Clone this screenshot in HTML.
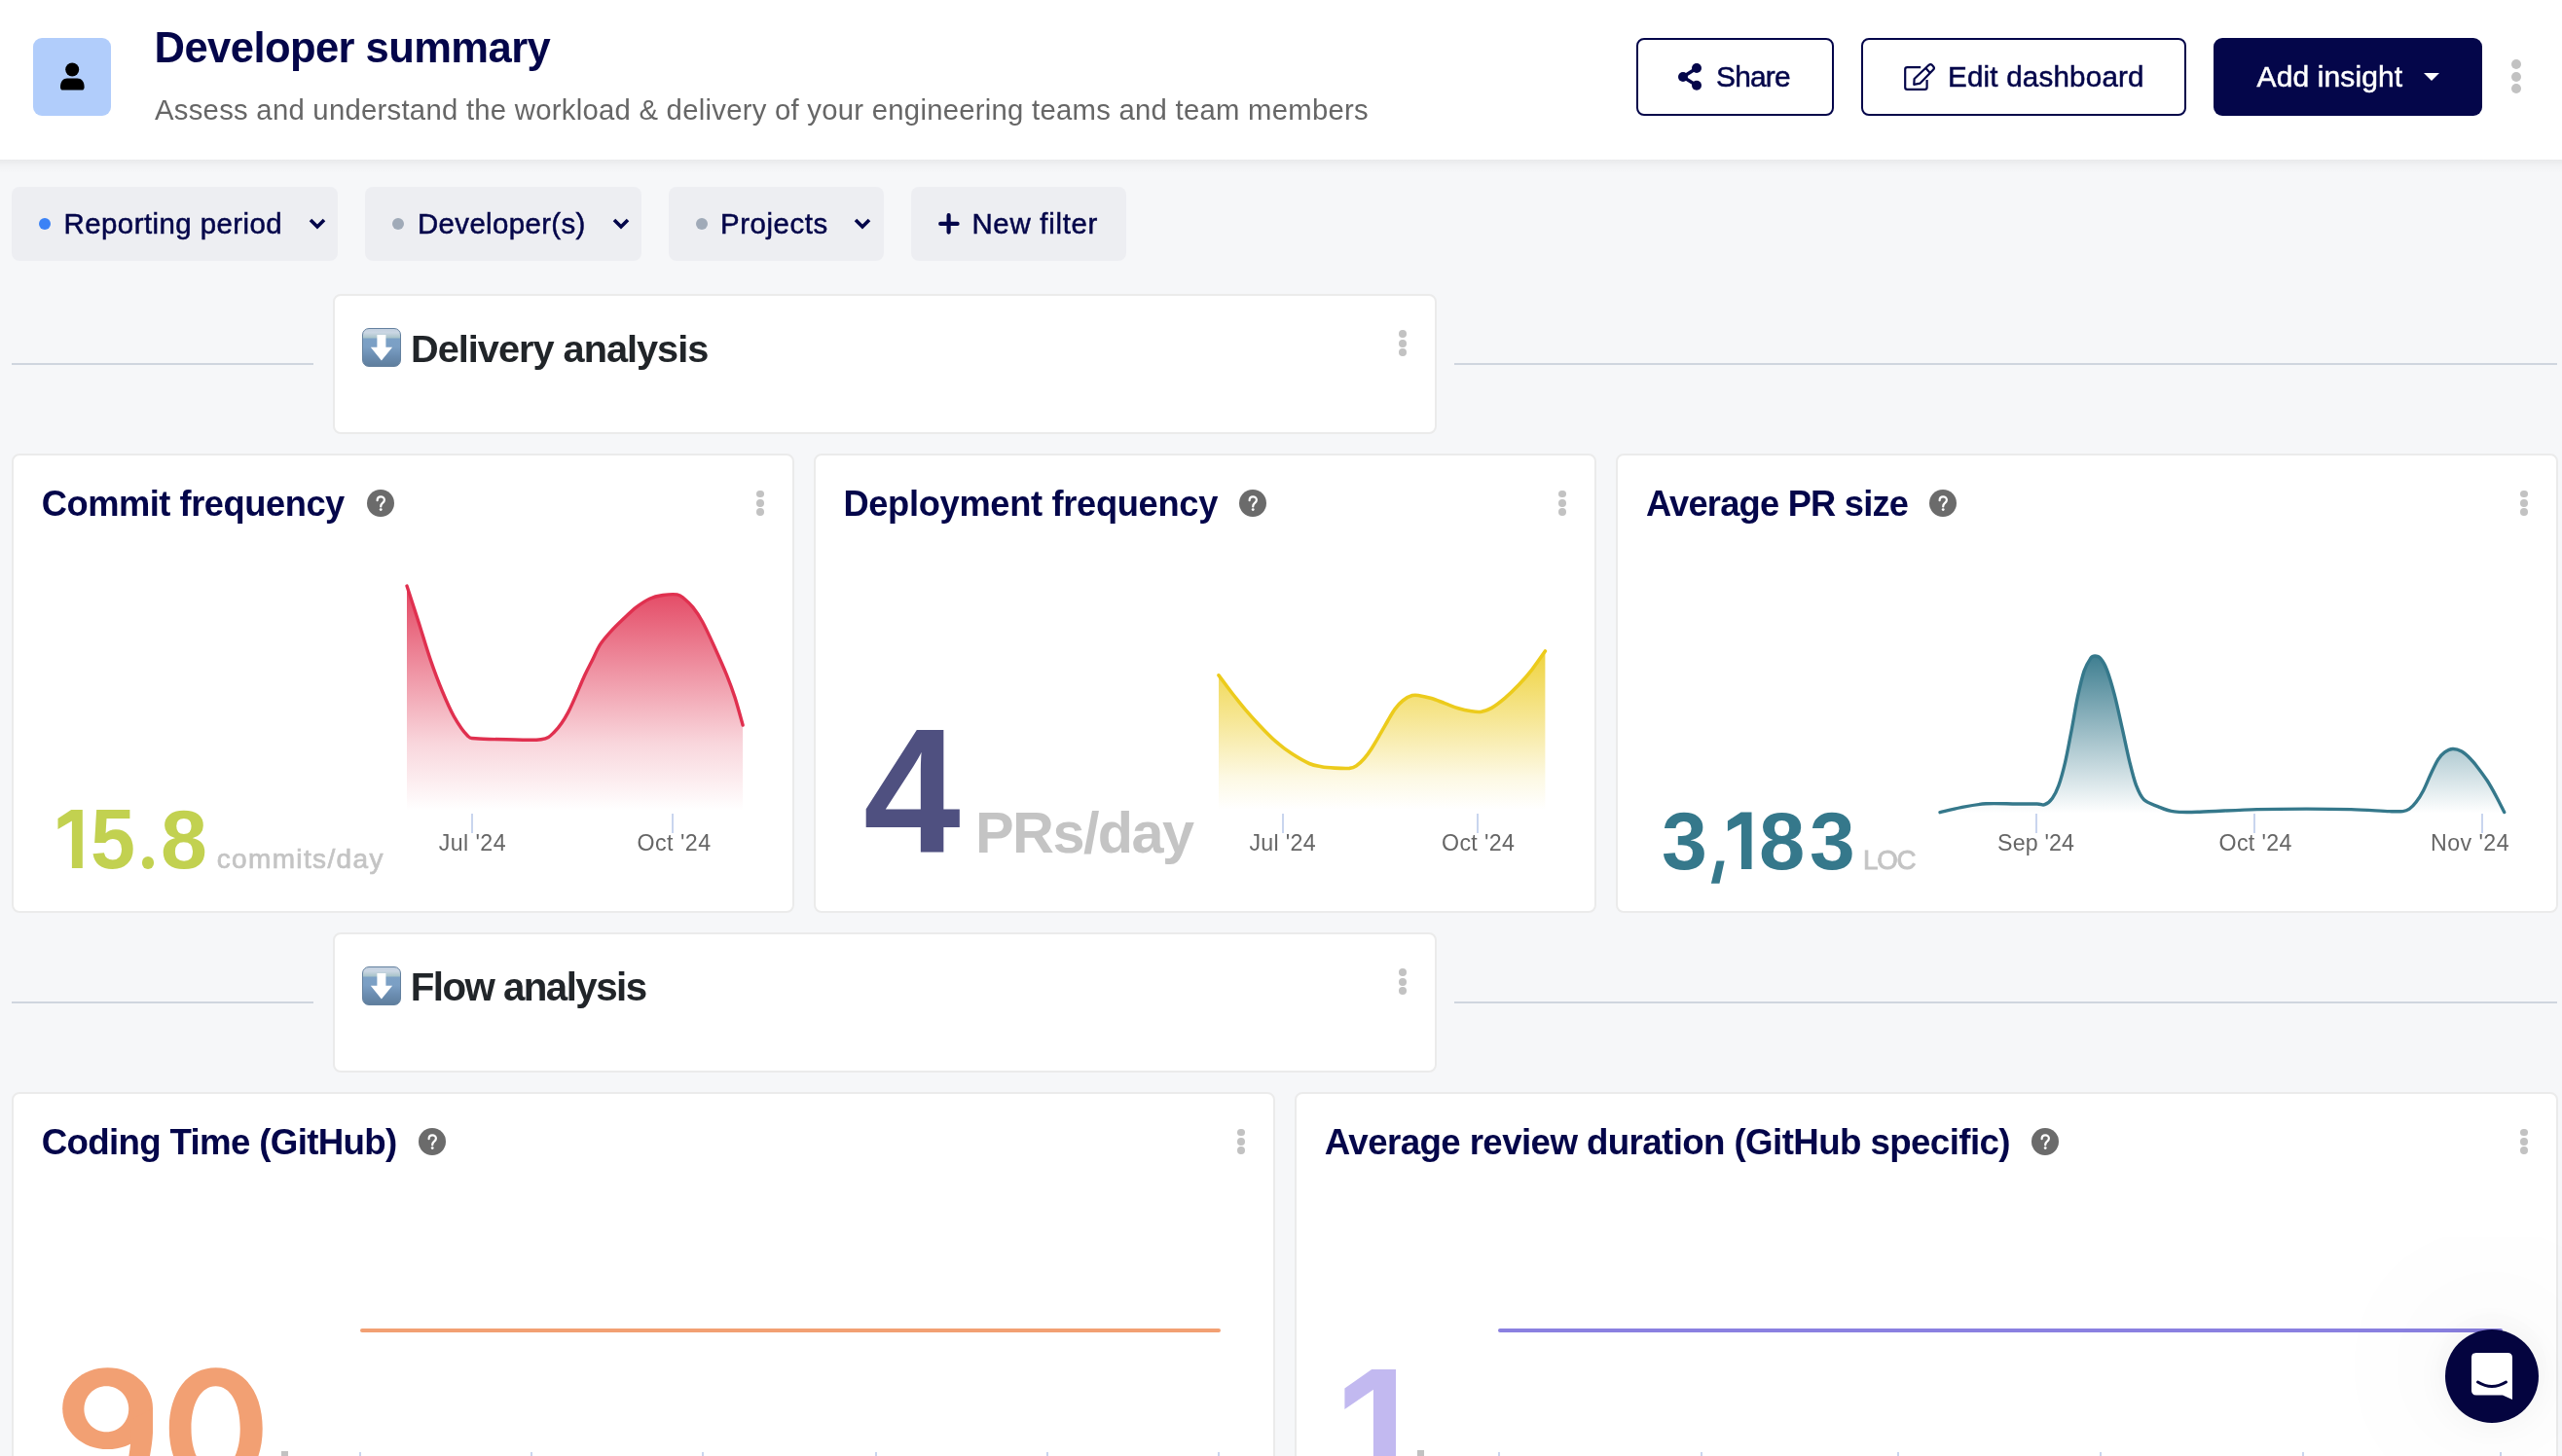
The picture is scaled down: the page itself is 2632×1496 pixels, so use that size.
<!DOCTYPE html>
<html><head><meta charset="utf-8">
<style>
html,body{margin:0;padding:0;}
body{width:2632px;height:1496px;overflow:hidden;background:#f6f7f9;font-family:"Liberation Sans",sans-serif;position:relative;color:#04064a;}
#root{position:absolute;left:0;top:0;width:2632px;height:1496px;overflow:hidden;background:#f6f7f9;will-change:transform;}
.abs{position:absolute;}
.t{position:absolute;white-space:nowrap;line-height:1;}
.med{-webkit-text-stroke:0.5px currentColor;}
#hdr{left:0;top:0;width:2632px;height:164px;background:#fff;}
.btn{position:absolute;box-sizing:border-box;border:2px solid #04064a;border-radius:8px;background:#fff;top:39px;height:80px;}
.chip{position:absolute;top:192px;height:76px;background:#edeef2;border-radius:8px;}
.dot{position:absolute;width:12px;height:12px;border-radius:50%;top:224px;}
.card{position:absolute;box-sizing:border-box;background:#fff;border:2px solid #ebebeb;border-radius:8px;}
.kebab{position:absolute;width:8px;}
.kebab i{display:block;width:7.8px;height:7.8px;border-radius:50%;background:#c2c2c2;margin-bottom:1.7px;}
.help{position:absolute;width:28px;height:28px;border-radius:50%;background:#6b6b6b;}
.help svg{position:absolute;left:0;top:0;}
.sline{position:absolute;height:2px;background:#cfd5de;}
.emoji{position:absolute;box-sizing:border-box;width:40px;height:40px;border-radius:7px;border:1px solid #64819f;background:linear-gradient(#c3d0df 0%,#cbd7e4 10%,#a8c3c9 24%,#7ca1c6 26%,#7b9fc4 48%,#6a8cb0 75%,#5f7e9d 100%);}
.axis{position:absolute;white-space:nowrap;line-height:1;font-size:24px;color:#666;}
.tick{position:absolute;width:2px;background:#c9d5ee;}

</style></head>
<body>
<div id="root">
<div id="hdr" class="abs"></div>
<div class="abs" style="left:0;top:164px;width:2632px;height:14px;background:linear-gradient(rgba(0,0,0,0.055),rgba(0,0,0,0.018) 45%,rgba(0,0,0,0));"></div>
<div class="abs" style="left:34px;top:39px;width:80px;height:80px;background:#b1cdfb;border-radius:9px;"></div>
<svg class="abs" style="left:54px;top:59px" width="40" height="40" viewBox="0 0 40 40">
<circle cx="20.2" cy="12.5" r="7" fill="#000"/>
<path d="M8,30.5 C8,24.5 11,21.6 15,21.6 L25.5,21.6 C29.5,21.6 32.6,24.5 32.6,30.5 C32.6,32.6 31.8,33.6 30,33.6 L10.6,33.6 C8.8,33.6 8,32.6 8,30.5 Z" fill="#000"/>
</svg>
<div class="t" id="title" style="left:158.6px;top:28px;font-size:43.57px;letter-spacing:-0.583px;color:#04064a;font-weight:bold;">Developer summary</div>
<div class="t" id="subtitle" style="left:159px;top:98px;font-size:29.28px;letter-spacing:0.268px;color:#666666;">Assess and understand the workload &amp; delivery of your engineering teams and team members</div>

<div class="btn" style="left:1681px;width:203px;"></div>
<svg class="abs" style="left:1722px;top:62px" width="30" height="34" viewBox="0 0 30 34">
<line x1="7" y1="17" x2="21" y2="8" stroke="#04064a" stroke-width="3.4"/>
<line x1="7" y1="17" x2="21" y2="25.7" stroke="#04064a" stroke-width="3.4"/>
<circle cx="7" cy="17" r="5" fill="#04064a"/>
<circle cx="21" cy="8" r="5" fill="#04064a"/>
<circle cx="21" cy="25.7" r="5" fill="#04064a"/>
</svg>
<div class="t" id="share" style="left:1763px;top:64px;font-size:29.86px;letter-spacing:-0.76px;color:#04064a;-webkit-text-stroke:0.5px #04064a;">Share</div>

<div class="btn" style="left:1912px;width:334px;"></div>
<svg class="abs" style="left:1952px;top:60px" width="40" height="38" viewBox="0 0 40 38">
<path d="M21.2,9.1 L7.4,9.1 Q5.2,9.1 5.2,11.3 L5.2,29.7 Q5.2,31.9 7.4,31.9 L25.4,31.9 Q27.6,31.9 27.6,29.7 L27.6,22.1" fill="none" stroke="#04064a" stroke-width="2.2"/>
<path d="M14.6,21 L29.6,6.8 Q31.3,5.4 32.9,6.9 L34.3,8.5 Q35.6,10.1 34.2,11.5 L20.4,25.7 L14.3,26.8 Z" fill="none" stroke="#04064a" stroke-width="2.2" stroke-linejoin="round"/>
<path d="M26.4,10 L30.4,14.4" stroke="#04064a" stroke-width="2.2"/>
</svg>
<div class="t" id="editd" style="left:2001px;top:64px;font-size:29.57px;letter-spacing:0.205px;color:#04064a;-webkit-text-stroke:0.5px #04064a;">Edit dashboard</div>

<div class="abs" style="left:2274px;top:39px;width:276px;height:80px;background:#04064a;border-radius:9px;"></div>
<div class="t" id="addi" style="left:2318.5px;top:64px;font-size:30px;letter-spacing:0.12px;color:#ffffff;-webkit-text-stroke:0.5px #fff;">Add insight</div>
<svg class="abs" style="left:2490px;top:75px" width="16" height="8" viewBox="0 0 16 8"><path d="M0,0 L16,0 L8,8 Z" fill="#fff"/></svg>
<div class="kebab" style="left:2580px;top:60.9px;"><i style="width:10px;height:10px;margin-bottom:2.75px"></i><i style="width:10px;height:10px;margin-bottom:2.75px"></i><i style="width:10px;height:10px"></i></div>

<div class="chip" style="left:12px;width:335px;"></div>
<div class="dot" style="left:40px;background:#3b82f6;"></div>
<div class="t" id="c1" style="left:65.6px;top:215px;font-size:29.42px;letter-spacing:0.443px;color:#04064a;-webkit-text-stroke:0.5px #04064a;">Reporting period</div>
<svg class="abs" style="left:316px;top:222px" width="20" height="16" viewBox="0 0 20 16"><path d="M3,4 L10,11 L17,4" fill="none" stroke="#04064a" stroke-width="3.6"/></svg>

<div class="chip" style="left:375px;width:284px;"></div>
<div class="dot" style="left:403px;background:#a0aab8;"></div>
<div class="t" id="c2" style="left:429px;top:215px;font-size:29.42px;letter-spacing:0.361px;color:#04064a;-webkit-text-stroke:0.5px #04064a;">Developer(s)</div>
<svg class="abs" style="left:628px;top:222px" width="20" height="16" viewBox="0 0 20 16"><path d="M3,4 L10,11 L17,4" fill="none" stroke="#04064a" stroke-width="3.6"/></svg>

<div class="chip" style="left:687px;width:221px;"></div>
<div class="dot" style="left:715px;background:#a0aab8;"></div>
<div class="t" id="c3" style="left:740px;top:215px;font-size:29.42px;letter-spacing:0.554px;color:#04064a;-webkit-text-stroke:0.5px #04064a;">Projects</div>
<svg class="abs" style="left:876px;top:222px" width="20" height="16" viewBox="0 0 20 16"><path d="M3,4 L10,11 L17,4" fill="none" stroke="#04064a" stroke-width="3.6"/></svg>

<div class="chip" style="left:936px;width:221px;"></div>
<svg class="abs" style="left:962px;top:218px" width="25" height="25" viewBox="0 0 25 25"><path d="M12.6,3.2 L12.6,20.6 M4.2,11.9 L21.6,11.9" stroke="#04064a" stroke-width="4.2" stroke-linecap="round"/></svg>
<div class="t" id="c4" style="left:998.4px;top:215px;font-size:29.42px;letter-spacing:0.716px;color:#04064a;-webkit-text-stroke:0.5px #04064a;">New filter</div>

<!-- Delivery analysis -->
<div class="sline" style="left:12px;top:373px;width:310px;"></div>
<div class="sline" style="left:1494px;top:373px;width:1133px;"></div>
<div class="card" style="left:342px;top:302px;width:1134px;height:144px;"></div>
<div class="emoji" style="left:372px;top:337px;"><svg width="40" height="40" viewBox="0 0 40 40" style="position:absolute;left:-1px;top:-1px"><path d="M15.4,6.9 H24.4 V19.8 H31.1 L19.9,33.4 L8.8,19.8 H15.4 Z" fill="#fff"/></svg></div>
<div class="t" id="s1" style="left:422px;top:339px;font-size:39.71px;letter-spacing:-0.999px;color:#212529;font-weight:bold;">Delivery analysis</div>
<div class="kebab" style="left:1437.1px;top:339.4px;"><i></i><i></i><i></i></div>

<!-- Commit frequency -->
<div class="card" style="left:12px;top:466px;width:804px;height:472px;"></div>
<div class="t" id="t1" style="left:42.7px;top:500px;font-size:36.29px;letter-spacing:-0.461px;color:#04064a;font-weight:bold;">Commit frequency</div>
<div class="help" style="left:377px;top:503px;"><svg width="28" height="28" viewBox="0 0 28 28"><path d="M10.6,11.2 C10.6,8.8 12.2,7.3 14.2,7.3 C16.3,7.3 17.9,8.8 17.9,10.7 C17.9,12.6 16.5,13.4 15.3,14.6 C14.6,15.3 14.2,16 14.2,17.4" fill="none" stroke="#fff" stroke-width="2.2" stroke-linecap="round"/><circle cx="14.2" cy="20.6" r="1.45" fill="#fff"/></svg></div>
<div class="kebab" style="left:777.2px;top:503.5px;"><i></i><i></i><i></i></div>
<svg class="abs" style="left:413.5px;top:597.5px" width="353" height="236" viewBox="0 0 353 236"><defs><linearGradient id="g1" x1="0" y1="0" x2="0" y2="1"><stop offset="0" stop-color="#e0304f" stop-opacity="0.9"/><stop offset="0.35" stop-color="#e0304f" stop-opacity="0.55"/><stop offset="0.7" stop-color="#e0304f" stop-opacity="0.2"/><stop offset="1" stop-color="#e0304f" stop-opacity="0"/></linearGradient></defs><path d="M4.0,4.0 C6.1,10.4 12.3,29.5 16.4,42.2 C20.4,54.9 24.3,68.5 28.3,80.1 C32.3,91.7 36.3,102.4 40.3,112.0 C44.3,121.6 47.9,130.2 52.2,137.8 C56.5,145.4 62.5,154.0 66.2,157.8 C69.9,161.6 67.9,160.1 74.5,160.8 C81.1,161.4 94.8,161.6 106.0,161.7 C117.2,161.9 133.5,163.0 141.8,161.7 C150.1,160.4 151.1,158.4 155.8,153.8 C160.4,149.2 164.6,143.5 169.7,133.9 C174.8,124.3 182.5,105.0 186.5,96.3 C190.5,87.6 191.2,86.8 193.9,81.5 C196.6,76.2 199.3,69.4 202.6,64.2 C205.9,59.1 209.8,54.9 213.7,50.6 C217.6,46.3 221.8,42.3 226.1,38.2 C230.4,34.1 235.2,29.4 239.7,25.9 C244.2,22.4 248.8,19.3 253.3,17.2 C257.8,15.1 262.2,14.2 266.9,13.5 C271.6,12.8 278.0,12.3 281.7,12.9 C285.4,13.5 286.4,15.0 289.1,17.2 C291.8,19.4 294.7,22.0 297.8,25.9 C300.9,29.8 303.9,33.9 307.6,40.7 C311.3,47.5 315.9,57.6 320.0,66.7 C324.1,75.8 328.9,86.5 332.4,95.1 C335.9,103.8 338.2,110.0 341.0,118.6 C343.8,127.3 347.8,142.3 349.1,147.0 L349.1,234.5 L4.0,234.5 Z" fill="url(#g1)"/><path d="M4.0,4.0 C6.1,10.4 12.3,29.5 16.4,42.2 C20.4,54.9 24.3,68.5 28.3,80.1 C32.3,91.7 36.3,102.4 40.3,112.0 C44.3,121.6 47.9,130.2 52.2,137.8 C56.5,145.4 62.5,154.0 66.2,157.8 C69.9,161.6 67.9,160.1 74.5,160.8 C81.1,161.4 94.8,161.6 106.0,161.7 C117.2,161.9 133.5,163.0 141.8,161.7 C150.1,160.4 151.1,158.4 155.8,153.8 C160.4,149.2 164.6,143.5 169.7,133.9 C174.8,124.3 182.5,105.0 186.5,96.3 C190.5,87.6 191.2,86.8 193.9,81.5 C196.6,76.2 199.3,69.4 202.6,64.2 C205.9,59.1 209.8,54.9 213.7,50.6 C217.6,46.3 221.8,42.3 226.1,38.2 C230.4,34.1 235.2,29.4 239.7,25.9 C244.2,22.4 248.8,19.3 253.3,17.2 C257.8,15.1 262.2,14.2 266.9,13.5 C271.6,12.8 278.0,12.3 281.7,12.9 C285.4,13.5 286.4,15.0 289.1,17.2 C291.8,19.4 294.7,22.0 297.8,25.9 C300.9,29.8 303.9,33.9 307.6,40.7 C311.3,47.5 315.9,57.6 320.0,66.7 C324.1,75.8 328.9,86.5 332.4,95.1 C335.9,103.8 338.2,110.0 341.0,118.6 C343.8,127.3 347.8,142.3 349.1,147.0" fill="none" stroke="#e0304f" stroke-width="3.4" stroke-linejoin="round" stroke-linecap="round"/></svg>
<svg class="abs" style="left:50px;top:825px" width="40" height="75" viewBox="0 0 40 75"><path d="M23.2,7.1 L34.8,7.1 L34.8,67 L23.9,67 L23.9,18.6 L9.5,26.9 L9.5,16 Z" fill="#c2d150"/></svg>
<div class="t" id="g15" style="left:93px;top:819px;font-size:86.81px;letter-spacing:0px;color:#c2d150;font-weight:bold;transform:scaleX(0.9523);transform-origin:0 0;">5</div>
<div class="abs" style="left:146.2px;top:880.4px;width:12.2px;height:12.2px;border-radius:50%;background:#c2d150;"></div>
<div class="t" id="g18" style="left:165.1px;top:819px;font-size:86.14px;letter-spacing:0px;color:#c2d150;font-weight:bold;">8</div>
<div class="t" id="u1" style="left:222.7px;top:869px;font-size:27.96px;letter-spacing:1.38px;color:#c4c4c4;-webkit-text-stroke:0.7px #c4c4c4;">commits/day</div>
<div class="tick" style="left:484px;top:836px;height:20px;"></div>
<div class="tick" style="left:690px;top:836px;height:20px;"></div>
<div class="axis" id="a11" style="left:450.8px;top:855px;font-size:23.19px;letter-spacing:0.405px;color:#666;">Jul '24</div><div class="axis" id="a12" style="left:654.5px;top:855px;font-size:23.19px;letter-spacing:0.484px;color:#666;">Oct '24</div>

<!-- Deployment frequency -->
<div class="card" style="left:836px;top:466px;width:804px;height:472px;"></div>
<div class="t" id="t2" style="left:866.4px;top:500px;font-size:36.29px;letter-spacing:-0.325px;color:#04064a;font-weight:bold;">Deployment frequency</div>
<div class="help" style="left:1273px;top:503px;"><svg width="28" height="28" viewBox="0 0 28 28"><path d="M10.6,11.2 C10.6,8.8 12.2,7.3 14.2,7.3 C16.3,7.3 17.9,8.8 17.9,10.7 C17.9,12.6 16.5,13.4 15.3,14.6 C14.6,15.3 14.2,16 14.2,17.4" fill="none" stroke="#fff" stroke-width="2.2" stroke-linecap="round"/><circle cx="14.2" cy="20.6" r="1.45" fill="#fff"/></svg></div>
<div class="kebab" style="left:1601.2px;top:503.5px;"><i></i><i></i><i></i></div>
<svg class="abs" style="left:1248px;top:665.2px" width="343" height="169" viewBox="0 0 343 169"><defs><linearGradient id="g2" x1="0" y1="0" x2="0" y2="1"><stop offset="0" stop-color="#eccb1c" stop-opacity="0.85"/><stop offset="0.45" stop-color="#eccb1c" stop-opacity="0.45"/><stop offset="0.8" stop-color="#eccb1c" stop-opacity="0.12"/><stop offset="1" stop-color="#eccb1c" stop-opacity="0"/></linearGradient></defs><path d="M4.0,28.8 C6.3,31.8 13.0,41.1 17.6,47.0 C22.2,52.9 26.9,58.8 31.6,64.3 C36.3,69.8 40.4,74.4 45.6,79.9 C50.8,85.4 57.4,92.2 63.0,97.2 C68.6,102.1 73.7,105.9 79.4,109.6 C85.1,113.3 92.0,117.3 97.0,119.5 C102.0,121.7 105.1,121.9 109.5,122.7 C113.9,123.5 118.4,123.8 123.2,124.1 C128.0,124.4 134.6,124.7 138.3,124.4 C142.0,124.0 142.7,123.6 145.2,122.0 C147.7,120.4 150.8,117.5 153.4,114.5 C156.0,111.5 158.4,108.2 161.0,104.2 C163.6,100.2 166.5,95.1 169.2,90.4 C172.0,85.7 174.9,80.5 177.5,76.0 C180.1,71.5 182.4,67.1 185.0,63.6 C187.6,60.0 190.3,57.0 193.3,54.7 C196.3,52.4 200.1,50.4 202.9,49.6 C205.7,48.8 206.9,49.2 210.2,49.7 C213.5,50.2 218.2,51.2 222.6,52.5 C226.9,53.8 231.7,55.9 236.3,57.6 C240.9,59.3 245.5,61.4 250.1,62.8 C254.7,64.2 259.8,65.2 263.8,65.8 C267.8,66.4 270.7,66.8 274.1,66.2 C277.5,65.6 280.4,64.7 284.4,62.4 C288.4,60.0 293.6,56.0 298.2,52.1 C302.8,48.2 307.3,43.9 311.9,39.1 C316.5,34.3 321.0,29.1 325.6,23.3 C330.2,17.4 337.1,7.2 339.4,4.0 L339.4,166.8 L4.0,166.8 Z" fill="url(#g2)"/><path d="M4.0,28.8 C6.3,31.8 13.0,41.1 17.6,47.0 C22.2,52.9 26.9,58.8 31.6,64.3 C36.3,69.8 40.4,74.4 45.6,79.9 C50.8,85.4 57.4,92.2 63.0,97.2 C68.6,102.1 73.7,105.9 79.4,109.6 C85.1,113.3 92.0,117.3 97.0,119.5 C102.0,121.7 105.1,121.9 109.5,122.7 C113.9,123.5 118.4,123.8 123.2,124.1 C128.0,124.4 134.6,124.7 138.3,124.4 C142.0,124.0 142.7,123.6 145.2,122.0 C147.7,120.4 150.8,117.5 153.4,114.5 C156.0,111.5 158.4,108.2 161.0,104.2 C163.6,100.2 166.5,95.1 169.2,90.4 C172.0,85.7 174.9,80.5 177.5,76.0 C180.1,71.5 182.4,67.1 185.0,63.6 C187.6,60.0 190.3,57.0 193.3,54.7 C196.3,52.4 200.1,50.4 202.9,49.6 C205.7,48.8 206.9,49.2 210.2,49.7 C213.5,50.2 218.2,51.2 222.6,52.5 C226.9,53.8 231.7,55.9 236.3,57.6 C240.9,59.3 245.5,61.4 250.1,62.8 C254.7,64.2 259.8,65.2 263.8,65.8 C267.8,66.4 270.7,66.8 274.1,66.2 C277.5,65.6 280.4,64.7 284.4,62.4 C288.4,60.0 293.6,56.0 298.2,52.1 C302.8,48.2 307.3,43.9 311.9,39.1 C316.5,34.3 321.0,29.1 325.6,23.3 C330.2,17.4 337.1,7.2 339.4,4.0" fill="none" stroke="#eccb1c" stroke-width="3.6" stroke-linejoin="round" stroke-linecap="round"/></svg>
<div class="t" id="g4" style="left:886.8px;top:723px;font-size:181.16px;letter-spacing:0px;color:#4f5080;font-weight:bold;transform:scaleX(0.9898);transform-origin:0 0;">4</div>
<div class="t" id="u2" style="left:1002px;top:826px;font-size:59.43px;letter-spacing:-1.566px;color:#c4c4c4;font-weight:bold;">PRs/day</div>
<div class="tick" style="left:1317px;top:836px;height:20px;"></div>
<div class="tick" style="left:1517px;top:836px;height:20px;"></div>
<div class="axis" id="a21" style="left:1283.4px;top:855px;font-size:23.19px;letter-spacing:0.322px;color:#666;">Jul '24</div><div class="axis" id="a22" style="left:1481px;top:855px;font-size:23.19px;letter-spacing:0.367px;color:#666;">Oct '24</div>

<!-- Average PR size -->
<div class="card" style="left:1660px;top:466px;width:968px;height:472px;"></div>
<div class="t" id="t3" style="left:1691px;top:500px;font-size:36.29px;letter-spacing:-0.785px;color:#04064a;font-weight:bold;">Average PR size</div>
<div class="help" style="left:1982px;top:503px;"><svg width="28" height="28" viewBox="0 0 28 28"><path d="M10.6,11.2 C10.6,8.8 12.2,7.3 14.2,7.3 C16.3,7.3 17.9,8.8 17.9,10.7 C17.9,12.6 16.5,13.4 15.3,14.6 C14.6,15.3 14.2,16 14.2,17.4" fill="none" stroke="#fff" stroke-width="2.2" stroke-linecap="round"/><circle cx="14.2" cy="20.6" r="1.45" fill="#fff"/></svg></div>
<div class="kebab" style="left:2589.3px;top:503.5px;"><i></i><i></i><i></i></div>
<svg class="abs" style="left:1989.3px;top:670.4px" width="588" height="168" viewBox="0 0 588 168"><defs><linearGradient id="g3" x1="0" y1="0" x2="0" y2="1"><stop offset="0" stop-color="#35788b" stop-opacity="0.95"/><stop offset="1" stop-color="#35788b" stop-opacity="0"/></linearGradient></defs><path d="M4.0,164.7 C7.6,163.9 17.8,161.1 25.7,159.6 C33.6,158.1 41.7,156.4 51.2,155.8 C60.7,155.2 74.0,156.0 82.7,156.0 C91.5,156.0 98.9,155.9 103.7,156.0 C108.5,156.1 109.0,157.7 111.6,156.7 C114.2,155.7 117.0,153.5 119.4,150.2 C121.8,146.9 123.7,143.2 125.9,137.1 C128.1,131.0 130.3,123.0 132.5,113.6 C134.7,104.3 136.8,92.3 139.0,81.0 C141.2,69.7 143.3,55.9 145.5,45.7 C147.7,35.5 149.8,26.1 152.0,19.6 C154.2,13.1 156.8,9.2 158.6,6.6 C160.5,4.0 161.4,4.0 163.1,4.0 C164.8,4.0 166.9,4.2 169.0,6.6 C171.1,9.0 173.1,12.0 175.5,18.3 C177.9,24.6 180.8,34.4 183.4,44.4 C186.0,54.4 188.6,66.9 191.2,78.4 C193.8,89.9 196.6,103.8 199.0,113.6 C201.4,123.4 203.2,130.8 205.6,137.1 C208.0,143.4 209.7,147.9 213.4,151.5 C217.1,155.1 222.6,156.5 227.8,158.6 C233.0,160.7 237.6,163.0 244.7,163.9 C251.9,164.8 256.6,164.6 270.7,164.2 C284.8,163.8 311.2,162.1 329.5,161.6 C347.8,161.1 364.6,161.1 380.7,161.1 C396.8,161.1 412.1,161.2 426.3,161.6 C440.5,162.0 456.9,163.3 465.8,163.6 C474.6,163.9 476.0,164.0 479.4,163.6 C482.8,163.2 483.9,162.7 486.2,161.1 C488.5,159.6 490.6,157.5 493.0,154.3 C495.4,151.2 498.1,147.0 500.6,142.2 C503.1,137.4 505.6,130.8 508.1,125.5 C510.6,120.2 513.3,114.2 515.7,110.4 C518.1,106.6 520.0,104.7 522.5,102.9 C525.0,101.1 527.9,99.6 530.8,99.5 C533.7,99.4 536.9,100.4 539.9,102.1 C542.9,103.8 546.2,106.9 549.0,109.7 C551.8,112.5 553.6,114.9 556.5,118.7 C559.4,122.5 563.1,127.4 566.3,132.3 C569.4,137.2 572.5,142.8 575.4,148.2 C578.3,153.6 582.3,161.8 583.7,164.5 L583.7,165.6 L4.0,165.6 Z" fill="url(#g3)"/><path d="M4.0,164.7 C7.6,163.9 17.8,161.1 25.7,159.6 C33.6,158.1 41.7,156.4 51.2,155.8 C60.7,155.2 74.0,156.0 82.7,156.0 C91.5,156.0 98.9,155.9 103.7,156.0 C108.5,156.1 109.0,157.7 111.6,156.7 C114.2,155.7 117.0,153.5 119.4,150.2 C121.8,146.9 123.7,143.2 125.9,137.1 C128.1,131.0 130.3,123.0 132.5,113.6 C134.7,104.3 136.8,92.3 139.0,81.0 C141.2,69.7 143.3,55.9 145.5,45.7 C147.7,35.5 149.8,26.1 152.0,19.6 C154.2,13.1 156.8,9.2 158.6,6.6 C160.5,4.0 161.4,4.0 163.1,4.0 C164.8,4.0 166.9,4.2 169.0,6.6 C171.1,9.0 173.1,12.0 175.5,18.3 C177.9,24.6 180.8,34.4 183.4,44.4 C186.0,54.4 188.6,66.9 191.2,78.4 C193.8,89.9 196.6,103.8 199.0,113.6 C201.4,123.4 203.2,130.8 205.6,137.1 C208.0,143.4 209.7,147.9 213.4,151.5 C217.1,155.1 222.6,156.5 227.8,158.6 C233.0,160.7 237.6,163.0 244.7,163.9 C251.9,164.8 256.6,164.6 270.7,164.2 C284.8,163.8 311.2,162.1 329.5,161.6 C347.8,161.1 364.6,161.1 380.7,161.1 C396.8,161.1 412.1,161.2 426.3,161.6 C440.5,162.0 456.9,163.3 465.8,163.6 C474.6,163.9 476.0,164.0 479.4,163.6 C482.8,163.2 483.9,162.7 486.2,161.1 C488.5,159.6 490.6,157.5 493.0,154.3 C495.4,151.2 498.1,147.0 500.6,142.2 C503.1,137.4 505.6,130.8 508.1,125.5 C510.6,120.2 513.3,114.2 515.7,110.4 C518.1,106.6 520.0,104.7 522.5,102.9 C525.0,101.1 527.9,99.6 530.8,99.5 C533.7,99.4 536.9,100.4 539.9,102.1 C542.9,103.8 546.2,106.9 549.0,109.7 C551.8,112.5 553.6,114.9 556.5,118.7 C559.4,122.5 563.1,127.4 566.3,132.3 C569.4,137.2 572.5,142.8 575.4,148.2 C578.3,153.6 582.3,161.8 583.7,164.5" fill="none" stroke="#35788b" stroke-width="3.4" stroke-linejoin="round" stroke-linecap="round"/></svg>
<div class="t" id="g33a" style="left:1706.8px;top:822px;font-size:84.14px;letter-spacing:0px;color:#35788b;font-weight:bold;transform:scaleX(1.0023);transform-origin:0 0;">3</div>
<svg class="abs" style="left:1750px;top:825px" width="60" height="90" viewBox="0 0 60 90"><path d="M13.5,59.5 L21.6,59.5 L16.5,82.8 L7.9,82.8 Z" fill="#35788b"/><path d="M38.6,9.6 L49.5,9.6 L49.5,67.9 L38.9,67.9 L38.9,21.5 L24.9,28.9 L24.9,18.4 Z" fill="#35788b"/></svg>
<div class="t" id="g38" style="left:1807.4px;top:822px;font-size:84.14px;letter-spacing:0px;color:#35788b;font-weight:bold;transform:scaleX(1.0093);transform-origin:0 0;">8</div>
<div class="t" id="g33b" style="left:1859.4px;top:822px;font-size:84.14px;letter-spacing:0px;color:#35788b;font-weight:bold;transform:scaleX(0.9977);transform-origin:0 0;">3</div>
<div class="t" id="u3" style="left:1914px;top:870px;font-size:27.68px;letter-spacing:-1.207px;color:#c4c4c4;-webkit-text-stroke:0.9px #c4c4c4;">LOC</div>
<div class="tick" style="left:2091px;top:836px;height:20px;"></div>
<div class="tick" style="left:2315px;top:836px;height:20px;"></div>
<div class="tick" style="left:2549px;top:836px;height:20px;"></div>
<div class="axis" id="a31" style="left:2052px;top:855px;font-size:23.19px;letter-spacing:0.17px;color:#666;">Sep '24</div><div class="axis" id="a32" style="left:2279.5px;top:855px;font-size:23.19px;letter-spacing:0.367px;color:#666;">Oct '24</div><div class="axis" id="a33" style="left:2497px;top:855px;font-size:23.19px;letter-spacing:0.441px;color:#666;">Nov '24</div>

<!-- Flow analysis -->
<div class="sline" style="left:12px;top:1029px;width:310px;"></div>
<div class="sline" style="left:1494px;top:1029px;width:1133px;"></div>
<div class="card" style="left:342px;top:958px;width:1134px;height:144px;"></div>
<div class="emoji" style="left:372px;top:993px;"><svg width="40" height="40" viewBox="0 0 40 40" style="position:absolute;left:-1px;top:-1px"><path d="M15.4,6.9 H24.4 V19.8 H31.1 L19.9,33.4 L8.8,19.8 H15.4 Z" fill="#fff"/></svg></div>
<div class="t" id="s2" style="left:421.7px;top:995px;font-size:40.29px;letter-spacing:-1.544px;color:#212529;font-weight:bold;">Flow analysis</div>
<div class="kebab" style="left:1437.1px;top:995.4px;"><i></i><i></i><i></i></div>

<!-- Coding time -->
<div class="card" style="left:12px;top:1122px;width:1298px;height:500px;"></div>
<div class="t" id="t4" style="left:42.7px;top:1156px;font-size:36.71px;letter-spacing:-0.685px;color:#04064a;font-weight:bold;">Coding Time (GitHub)</div>
<div class="help" style="left:430px;top:1159px;"><svg width="28" height="28" viewBox="0 0 28 28"><path d="M10.6,11.2 C10.6,8.8 12.2,7.3 14.2,7.3 C16.3,7.3 17.9,8.8 17.9,10.7 C17.9,12.6 16.5,13.4 15.3,14.6 C14.6,15.3 14.2,16 14.2,17.4" fill="none" stroke="#fff" stroke-width="2.2" stroke-linecap="round"/><circle cx="14.2" cy="20.6" r="1.45" fill="#fff"/></svg></div>
<div class="kebab" style="left:1271.2px;top:1159.5px;"><i></i><i></i><i></i></div>
<div class="abs" style="left:370px;top:1364.6px;width:884px;height:4.2px;border-radius:2px;background:#f2a073;"></div>
<svg class="abs" style="left:0;top:1380px" width="320" height="116" viewBox="0 0 320 116"><path d="M64.2,67.2 C64.2,43.7 84.6,25.3 110.6,25.3 C136.6,25.3 157.0,43.7 157.0,67.2 C157.0,90.7 136.6,109.1 110.6,109.1 C84.6,109.1 64.2,90.7 64.2,67.2 Z" fill="#f2a073"/><path d="M132,80 L157,67.2 L157,92 C156.5,102 155,110 153.3,120 L131.7,120 C133.5,110 134.8,100 134.8,88 Z" fill="#f2a073"/><path d="M86.4,67.7 C86.4,54.5 96.5,44.2 109.3,44.2 C122.1,44.2 132.2,54.5 132.2,67.7 C132.2,80.9 122.1,91.2 109.3,91.2 C96.5,91.2 86.4,80.9 86.4,67.7 Z" fill="#fff"/><path d="M173.8,87.8 C173.8,50.3 193.0,25.3 221.8,25.3 C250.5,25.3 269.7,50.3 269.7,87.8 C269.7,125.3 250.5,150.3 221.8,150.3 C193.0,150.3 173.8,125.3 173.8,87.8 Z M196.5,87.7 C196.5,61.6 206.6,44.2 221.6,44.2 C236.6,44.2 246.7,61.6 246.7,87.7 C246.7,113.8 236.6,131.2 221.6,131.2 C206.6,131.2 196.5,113.8 196.5,87.7 Z" fill="#f2a073" fill-rule="evenodd"/></svg>
<div class="abs" style="left:289px;top:1490.5px;width:7px;height:10px;background:#c2c2c2;"></div>
<div class="tick" style="left:369px;top:1492px;height:10px;"></div>
<div class="tick" style="left:545px;top:1492px;height:10px;"></div>
<div class="tick" style="left:721px;top:1492px;height:10px;"></div>
<div class="tick" style="left:899px;top:1492px;height:10px;"></div>
<div class="tick" style="left:1075px;top:1492px;height:10px;"></div>
<div class="tick" style="left:1251px;top:1492px;height:10px;"></div>

<!-- Avg review -->
<div class="card" style="left:1330px;top:1122px;width:1298px;height:500px;"></div>
<div class="t" id="t5" style="left:1360.8px;top:1156px;font-size:36.71px;letter-spacing:-0.602px;color:#04064a;font-weight:bold;">Average review duration (GitHub specific)</div>
<div class="help" style="left:2087px;top:1159px;"><svg width="28" height="28" viewBox="0 0 28 28"><path d="M10.6,11.2 C10.6,8.8 12.2,7.3 14.2,7.3 C16.3,7.3 17.9,8.8 17.9,10.7 C17.9,12.6 16.5,13.4 15.3,14.6 C14.6,15.3 14.2,16 14.2,17.4" fill="none" stroke="#fff" stroke-width="2.2" stroke-linecap="round"/><circle cx="14.2" cy="20.6" r="1.45" fill="#fff"/></svg></div>
<div class="kebab" style="left:2589.3px;top:1159.5px;"><i></i><i></i><i></i></div>
<div class="abs" style="left:1539px;top:1364.6px;width:1032px;height:4.2px;border-radius:2px;background:#8a80e0;"></div>
<svg class="abs" style="left:1370px;top:1400px" width="80" height="96" viewBox="0 0 80 96"><path d="M39.2,7.1 L64,7.1 L64,100 L40.9,100 L40.9,27.8 L11.4,48.1 L11.4,26.6 Z" fill="#c2b9f0"/></svg>
<div class="abs" style="left:1456px;top:1489.5px;width:7px;height:10px;background:#c2c2c2;"></div>
<div class="tick" style="left:1539px;top:1492px;height:10px;"></div>
<div class="tick" style="left:1747px;top:1492px;height:10px;"></div>
<div class="tick" style="left:1949px;top:1492px;height:10px;"></div>
<div class="tick" style="left:2157px;top:1492px;height:10px;"></div>
<div class="tick" style="left:2365px;top:1492px;height:10px;"></div>
<div class="tick" style="left:2568px;top:1492px;height:10px;"></div>

<!-- chat bubble -->
<div class="abs" style="left:2512px;top:1366px;width:96px;height:96px;border-radius:50%;background:#04043f;box-shadow:0 0 30px 6px rgba(0,0,0,0.035),0 -10px 150px 40px rgba(0,0,0,0.028);"></div>
<svg class="abs" style="left:2530px;top:1382px" width="60" height="64" viewBox="0 0 60 64">
<path d="M14,8 L46,8 Q51,8 51,13 L51,56 L41,51.5 L14,51.5 Q9,51.5 9,46.5 L9,13 Q9,8 14,8 Z" fill="#fff"/>
<path d="M15.5,38 Q30,47 44.5,38" fill="none" stroke="#04043f" stroke-width="3" stroke-linecap="round"/>
</svg>

</div>
</body></html>
